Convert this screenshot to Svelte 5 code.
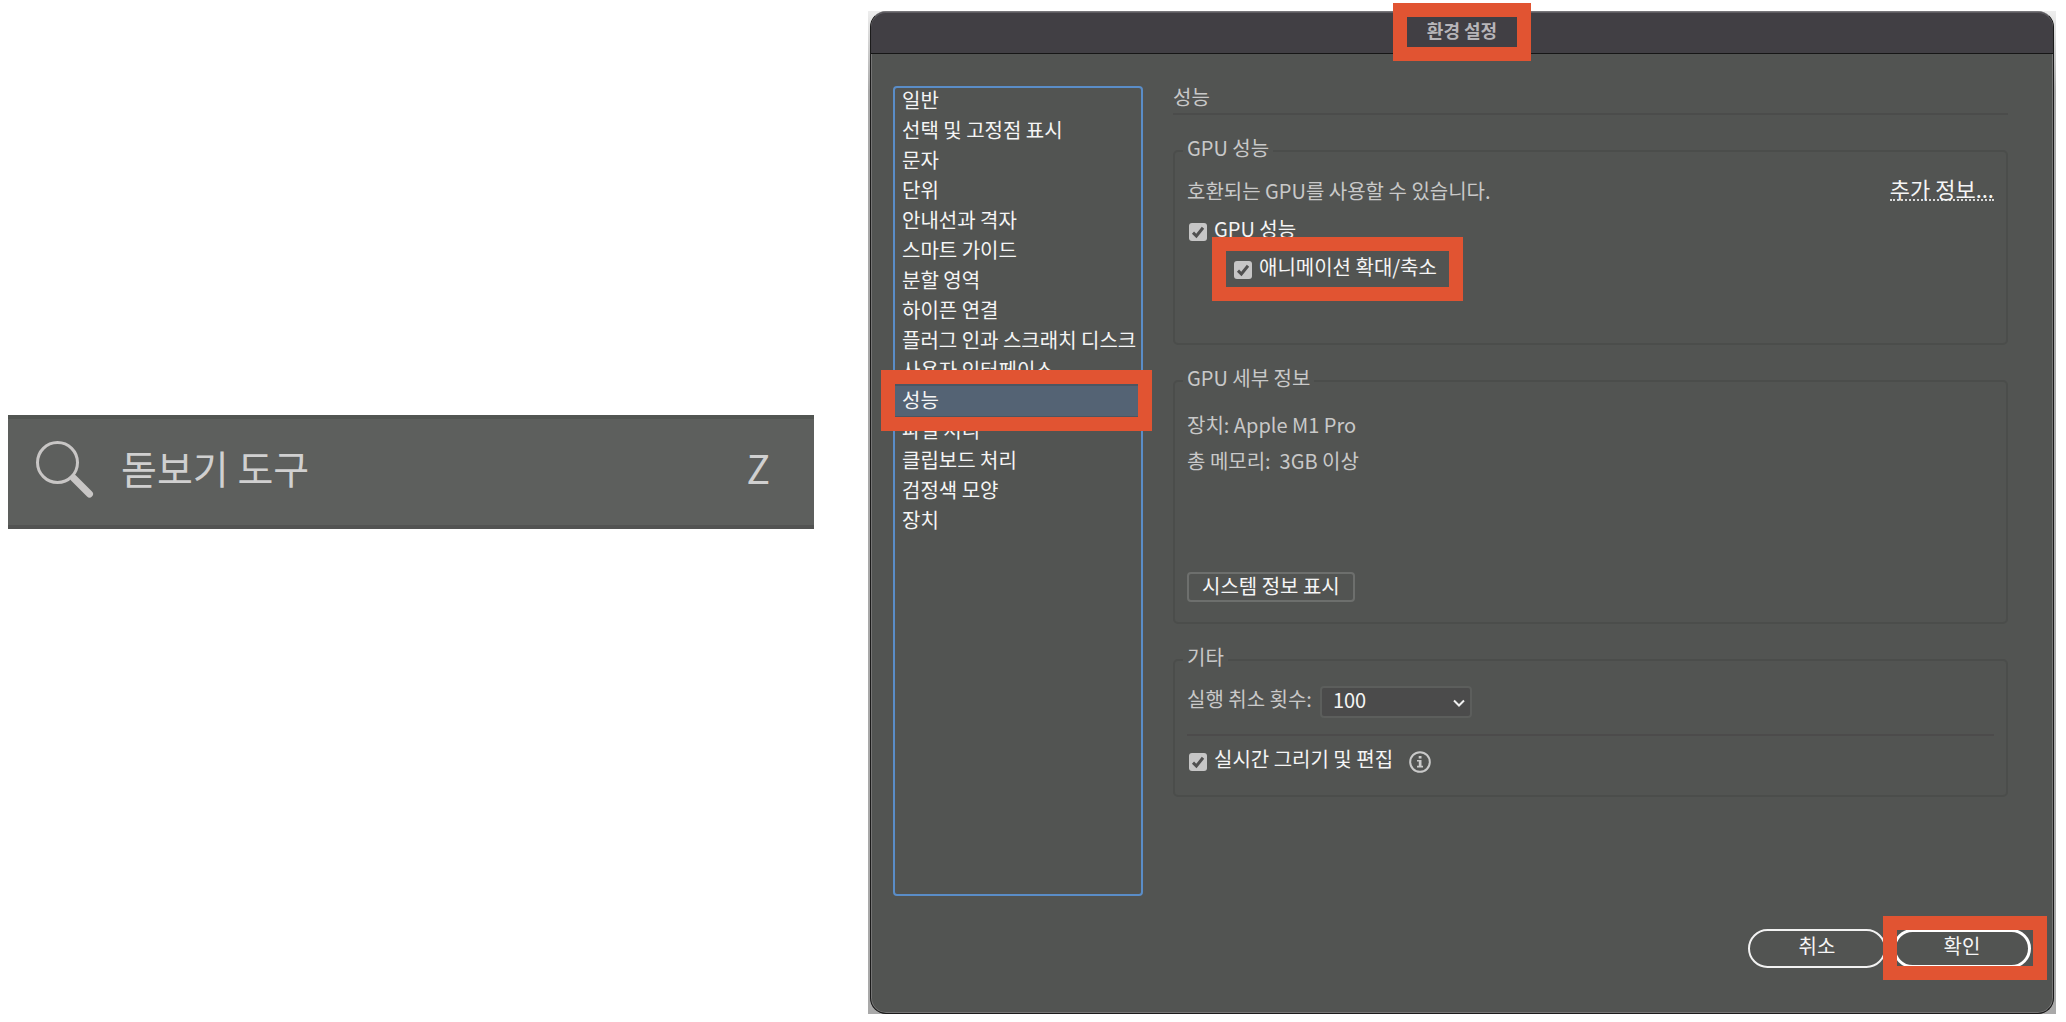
<script lang="ts">
  type Category = { id: string; label: string }

  const categories: Category[] = [
    { id: 'general', label: '일반' },
    { id: 'selection', label: '선택 및 고정점 표시' },
    { id: 'type', label: '문자' },
    { id: 'units', label: '단위' },
    { id: 'guides', label: '안내선과 격자' },
    { id: 'smart-guides', label: '스마트 가이드' },
    { id: 'slices', label: '분할 영역' },
    { id: 'hyphenation', label: '하이픈 연결' },
    { id: 'plugins', label: '플러그 인과 스크래치 디스크' },
    { id: 'interface', label: '사용자 인터페이스' },
    { id: 'performance', label: '성능' },
    { id: 'files', label: '파일 처리' },
    { id: 'clipboard', label: '클립보드 처리' },
    { id: 'black', label: '검정색 모양' },
    { id: 'devices', label: '장치' },
  ]

  let selected = $state('performance')
  let gpu = $state(true)
  let animatedZoom = $state(true)
  let realtime = $state(true)
  let undoCount = $state('100')
</script>

{#snippet tick()}
  <svg class="tick" viewBox="0 0 18 18" aria-hidden="true">
    <path d="M4 9.6 7.4 13 14 4.8" />
  </svg>
{/snippet}

<div class="page">
  <div class="tool">
    <svg class="magnifier" viewBox="0 0 58 58" aria-hidden="true">
      <circle cx="21.5" cy="21.5" r="20" />
      <path d="m37.5 37 16 16" />
    </svg>
    <span class="tool-name">돋보기 도구</span>
    <kbd>Z</kbd>
  </div>

  <div class="backdrop">
    <div class="dialog" role="dialog" aria-labelledby="dialog-title">
      <header>
        <h1 id="dialog-title">환경 설정<span class="mark mark-title"></span></h1>
      </header>

      <div class="body">
        <ul class="categories">
          {#each categories as category (category.id)}
            <li class:selected={selected === category.id}>
              <button onclick={() => (selected = category.id)}>{category.label}</button>
              {#if category.id === 'performance'}
                <span class="mark mark-category"></span>
              {/if}
            </li>
          {/each}
        </ul>

        <section>
          <h2>성능</h2>

          <fieldset>
            <legend>GPU 성능</legend>
            <div class="status">
              <p>호환되는 GPU를 사용할 수 있습니다.</p>
              <a href="#more">추가 정보...</a>
            </div>
            <label class="check">
              <span class="box"><input type="checkbox" bind:checked={gpu} />{@render tick()}</span>
              <span class="check-text">GPU 성능</span>
            </label>
            <label class="check nested">
              <span class="box"><input type="checkbox" bind:checked={animatedZoom} />{@render tick()}</span>
              <span class="check-text">애니메이션 확대/축소</span>
              <span class="mark mark-zoom"></span>
            </label>
          </fieldset>

          <fieldset>
            <legend>GPU 세부 정보</legend>
            <p class="detail">장치: Apple M1 Pro</p>
            <p class="detail">총 메모리:&nbsp; 3GB 이상</p>
            <button class="system-info">시스템 정보 표시</button>
          </fieldset>

          <fieldset>
            <legend>기타</legend>
            <div class="undo">
              <label for="undo-count">실행 취소 횟수:</label>
              <div class="select">
                <select id="undo-count" bind:value={undoCount}>
                  <option>50</option>
                  <option>100</option>
                  <option>200</option>
                </select>
                <svg viewBox="0 0 12 8" aria-hidden="true"><path d="m1 1.5 5 5 5-5" /></svg>
              </div>
            </div>
            <hr />
            <div class="realtime">
              <label class="check">
                <span class="box"><input type="checkbox" bind:checked={realtime} />{@render tick()}</span>
                <span class="check-text">실시간 그리기 및 편집</span>
              </label>
              <svg class="info" viewBox="0 0 22 22" aria-hidden="true">
                <circle cx="11" cy="11" r="9.8" />
                <path d="M9.7 4.9h2.8v2.6H9.7zM8 9h4.5v5.8H14v1.6H8v-1.6h1.8v-4.2H8z" />
              </svg>
            </div>
          </fieldset>
        </section>
      </div>

      <footer>
        <button class="pill">취소</button>
        <button class="pill primary">확인<span class="mark mark-ok"></span></button>
      </footer>
    </div>
  </div>
</div>

<style>
  :global(body) {
    background: #ffffff;
  }

  .page,
  .page :global(*) {
    box-sizing: border-box;
  }

  .page {
    display: grid;
    grid-template-columns: 806fr 1188fr;
    column-gap: 54px;
    min-height: 100vh;
    padding: 11px 10px 8px 8px;
    font-family: 'Noto Sans CJK KR', sans-serif;
    font-size: 20px;
    color: #c9c9c9;
  }

  h1,
  h2,
  p,
  ul {
    margin: 0;
    padding: 0;
    font-weight: 400;
  }

  button,
  select {
    font: inherit;
    color: #f5f5f5;
    cursor: pointer;
  }

  /* Tool row */
  .tool {
    display: flex;
    align-items: center;
    align-self: start;
    height: 114px;
    margin-top: 404px;
    padding: 0 44px 4px 28px;
    background: #5d5f5d;
    box-shadow: inset 0 4px #525552, inset 0 -4px #525352;
    font-size: 39px;
    line-height: 48px;
    color: #d0d0d0;
  }

  .magnifier {
    width: 58px;
    height: 58px;
    margin-right: 27px;
    fill: none;
    stroke: #c8c6c5;
    stroke-width: 3;
    stroke-linecap: round;
  }

  .magnifier path {
    stroke-width: 7;
  }

  .tool-name,
  kbd {
    padding-bottom: 6px;
  }

  kbd {
    margin-left: auto;
    font: inherit;
  }

  /* Dialog frame */
  .backdrop {
    display: flex;
    padding: 0 2px;
    background: linear-gradient(#eeeeee, #a9a9a9 80px);
  }

  .dialog {
    flex: 1;
    display: flex;
    flex-direction: column;
    min-width: 0;
    border: 1px solid #1b1b1b;
    border-top-color: #77767a;
    border-radius: 16px;
    background: #525452;
    box-shadow: inset 0 0 0 1px #747474;
  }

  header {
    display: flex;
    justify-content: center;
    height: 42px;
    border-bottom: 1px solid #161616;
    border-radius: 15px 15px 0 0;
    background: #413f44;
    box-shadow: inset 0 1px #5f5d62;
  }

  h1 {
    position: relative;
    font-size: 18px;
    font-weight: 700;
    line-height: 36px;
    color: #b7b5b9;
  }

  .body {
    flex: 1;
    display: grid;
    grid-template-columns: 250px 1fr;
    column-gap: 30px;
    padding: 32px 45px 0 22px;
  }

  /* Category list */
  .categories {
    list-style: none;
    border-radius: 4px;
    outline: 2px solid #5a8dc8;
    outline-offset: -2px;
  }

  li {
    position: relative;
    height: 30px;
  }

  li button {
    display: block;
    width: 100%;
    padding: 0 0 2px 9px;
    border: 0;
    background: none;
    line-height: 28px;
    text-align: left;
    white-space: nowrap;
  }

  li.selected {
    z-index: 1;
    background: #546374;
    box-shadow: 0 0 0 2px #4b5662;
  }

  /* Settings */
  h2 {
    padding-bottom: 5px;
    border-bottom: 2px solid #4b4c4b;
    font-size: 20px;
    line-height: 22px;
  }

  fieldset {
    min-width: 0;
    margin: 22px 0 0;
    padding: 12px 12px 20px;
    border: 2px solid #4b4d4b;
    border-radius: 5px;
  }

  legend {
    margin-left: -4px;
    padding: 0 4px 6px;
    line-height: 22px;
  }

  .status {
    display: flex;
    justify-content: space-between;
    margin-bottom: 14px;
    line-height: 28px;
  }

  .status a {
    align-self: flex-start;
    border-bottom: 2px dotted #d8d8d8;
    font-size: 22px;
    line-height: 22px;
    color: #f5f5f5;
    text-decoration: none;
  }

  .check {
    position: relative;
    display: flex;
    align-items: center;
    gap: 7px;
    width: fit-content;
    margin-left: 2px;
    color: #f5f5f5;
  }

  .check-text {
    padding-bottom: 6px;
    line-height: 20px;
  }

  .nested {
    margin: 12px 0 40px 47px;
  }

  .box {
    position: relative;
    width: 18px;
    height: 18px;
  }

  .box input {
    display: block;
    appearance: none;
    width: 18px;
    height: 18px;
    margin: 0;
    border-radius: 3px;
    background: #c6c6c6;
  }

  .tick {
    position: absolute;
    inset: 0;
    fill: none;
    stroke: #505050;
    stroke-width: 3;
    pointer-events: none;
    visibility: hidden;
  }

  input:checked + .tick {
    visibility: visible;
  }

  .detail {
    line-height: 36px;
  }

  .system-info {
    display: block;
    height: 30px;
    margin-top: 93px;
    padding: 0 13px 2px;
    border: 2px solid #6d6f6d;
    border-radius: 4px;
    background: none;
    line-height: 24px;
  }

  .undo {
    display: flex;
    align-items: center;
    gap: 8px;
  }

  .undo label {
    padding-bottom: 6px;
    line-height: 20px;
  }

  .select {
    position: relative;
    width: 152px;
  }

  .select select {
    display: block;
    appearance: none;
    width: 100%;
    height: 32px;
    padding: 0 30px 4px 11px;
    border: 2px solid #5c5e5c;
    border-radius: 4px;
    background: #4b4b4b;
    line-height: 24px;
  }

  .select svg {
    position: absolute;
    top: 13px;
    right: 7px;
    width: 12px;
    height: 8px;
    fill: none;
    stroke: #f0f0f0;
    stroke-width: 2;
    pointer-events: none;
  }

  hr {
    height: 2px;
    margin: 16px 0 13px;
    border: 0;
    background: #4c4b4b;
  }

  .realtime {
    display: flex;
    align-items: center;
    gap: 16px;
  }

  .info {
    width: 22px;
    height: 22px;
    fill: #c9c9c9;
  }

  .info circle {
    fill: none;
    stroke: #c9c9c9;
    stroke-width: 2;
  }

  footer {
    display: flex;
    justify-content: flex-end;
    gap: 7px;
    padding: 33px 22px 45px;
  }

  .pill {
    position: relative;
    width: 138px;
    height: 39px;
    padding: 0 0 5px;
    border: 2px solid #f2f2f2;
    border-radius: 20px;
    background: none;
    line-height: 24px;
  }

  .pill.primary {
    border: 3px solid #ffffff;
  }

  /* Callout frames around the highlighted steps */
  .mark {
    position: absolute;
    z-index: 2;
    border: 14px solid #e15432;
    pointer-events: none;
  }

  .mark-title {
    inset: -9px -34px -8px;
  }

  .mark-category {
    inset: -16px -9px -15px -12px;
  }

  .mark-zoom {
    inset: -20px -26px -18px -22px;
  }

  .mark-ok {
    inset: -16px -19px -15px -13px;
  }
</style>
